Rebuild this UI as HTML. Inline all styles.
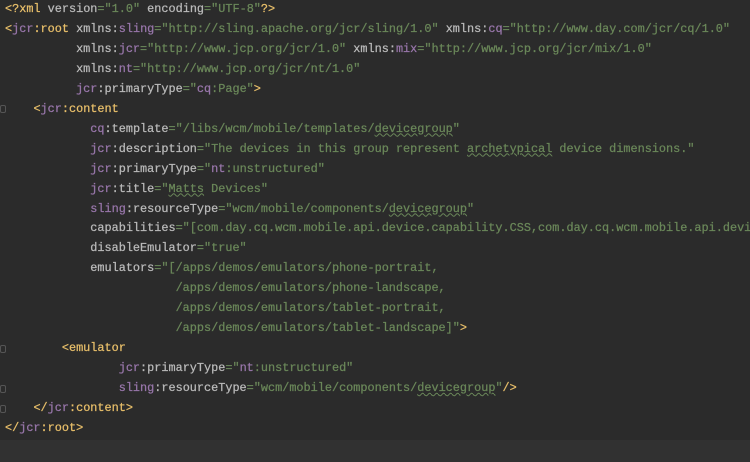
<!DOCTYPE html>
<html><head><meta charset="utf-8"><style>
body{margin:0;width:750px;height:462px;background:#2b2b2b;overflow:hidden;position:relative}
.bot{position:absolute;left:0;top:440px;width:750px;height:22px;background:#313131}
pre{position:absolute;left:5px;top:0;margin:0;font-family:"Liberation Mono",monospace;font-size:11.85px;line-height:19.95px;color:#bababa;white-space:pre;-webkit-text-stroke:0.25px}
.t{color:#e8bf6a}.n{color:#9876aa}.v{color:#6a8759}.a{color:#bababa}.u{text-decoration:underline wavy #6a8759;text-decoration-thickness:1px}
.g{position:absolute;left:0;width:6px;height:8px;border:1px solid #555;box-sizing:border-box;border-radius:2px}
</style></head><body>
<div class="bot"></div>
<div class="g" style="top:105px"></div><div class="g" style="top:345px"></div><div class="g" style="top:385px"></div><div class="g" style="top:405px"></div>
<pre><span class="t">&lt;?xml </span>version<span class="v">="1.0"</span> encoding<span class="v">="UTF-8"</span><span class="t">?&gt;</span>
<span class="t">&lt;</span><span class="n">jcr</span><span class="t">:root </span>xmlns:<span class="n">sling</span><span class="v">="http://sling.apache.org/jcr/sling/1.0"</span> xmlns:<span class="n">cq</span><span class="v">="http://www.day.com/jcr/cq/1.0"</span>
          xmlns:<span class="n">jcr</span><span class="v">="http://www.jcp.org/jcr/1.0"</span> xmlns:<span class="n">mix</span><span class="v">="http://www.jcp.org/jcr/mix/1.0"</span>
          xmlns:<span class="n">nt</span><span class="v">="http://www.jcp.org/jcr/nt/1.0"</span>
          <span class="n">jcr</span>:primaryType<span class="v">="</span><span class="n">cq</span><span class="v">:Page"</span><span class="t">&gt;</span>
    <span class="t">&lt;</span><span class="n">jcr</span><span class="t">:content</span>
            <span class="n">cq</span>:template<span class="v">="/libs/wcm/mobile/templates/<span class="u">devicegroup</span>"</span>
            <span class="n">jcr</span>:description<span class="v">="The devices in this group represent <span class="u">archetypical</span> device dimensions."</span>
            <span class="n">jcr</span>:primaryType<span class="v">="</span><span class="n">nt</span><span class="v">:unstructured"</span>
            <span class="n">jcr</span>:title<span class="v">="<span class="u">Matts</span> Devices"</span>
            <span class="n">sling</span>:resourceType<span class="v">="wcm/mobile/components/<span class="u">devicegroup</span>"</span>
            capabilities<span class="v">="[com.day.cq.wcm.mobile.api.device.capability.CSS,com.day.cq.wcm.mobile.api.device</span>
            disableEmulator<span class="v">="true"</span>
            emulators<span class="v">="[/apps/demos/emulators/phone-portrait,</span>
<span class="v">                        /apps/demos/emulators/phone-landscape,</span>
<span class="v">                        /apps/demos/emulators/tablet-portrait,</span>
<span class="v">                        /apps/demos/emulators/tablet-landscape]"</span><span class="t">&gt;</span>
        <span class="t">&lt;emulator</span>
                <span class="n">jcr</span>:primaryType<span class="v">="</span><span class="n">nt</span><span class="v">:unstructured"</span>
                <span class="n">sling</span>:resourceType<span class="v">="wcm/mobile/components/<span class="u">devicegroup</span>"</span><span class="t">/&gt;</span>
    <span class="t">&lt;/</span><span class="n">jcr</span><span class="t">:content&gt;</span>
<span class="t">&lt;/</span><span class="n">jcr</span><span class="t">:root&gt;</span></pre>
</body></html>
